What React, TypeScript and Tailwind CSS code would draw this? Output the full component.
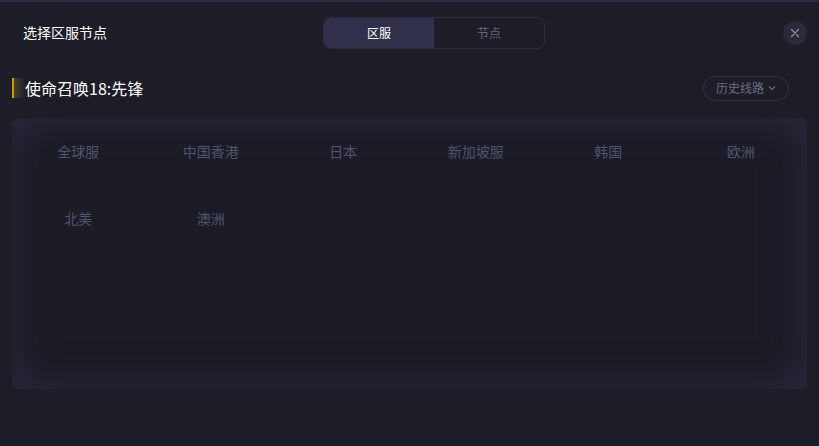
import { useState } from "react";

const REGIONS = ["全球服", "中国香港", "日本", "新加坡服", "韩国", "欧洲", "北美", "澳洲"];

export default function App() {
  const [tab, setTab] = useState<"region" | "node">("region");

  return (
    <div
      className="w-[819px] h-[446px] bg-[#1d1d28] border-t-2 border-[#2e2b45] flex flex-col overflow-hidden"
      style={{ fontFamily: '"Noto Sans CJK SC", "Noto Sans", sans-serif' }}
    >
      {/* header */}
      <div className="flex items-center h-[31px] mt-[15px] pl-[23px] pr-[12px]">
        <div className="w-[300px] text-[14px] text-white">选择区服节点</div>
        <div className="flex w-[222px] h-[32px] rounded-[8px] border border-[#2e2d40] overflow-hidden text-[12px]">
          <button
            onClick={() => setTab("region")}
            className={`flex-1 ${tab === "region" ? "bg-[#30304a] text-white" : "text-[#66667a]"}`}
          >
            区服
          </button>
          <button
            onClick={() => setTab("node")}
            className={`flex-1 ${tab === "node" ? "bg-[#30304a] text-white" : "text-[#66667a]"}`}
          >
            节点
          </button>
        </div>
        <div className="flex-1 flex justify-end">
          <button className="w-6 h-6 rounded-full bg-[#2a2a3a] flex items-center justify-center">
            <svg width="10" height="10" viewBox="0 0 10 10" stroke="#8a8a9c" strokeWidth="1.4" strokeLinecap="round">
              <path d="M1.5 1.5l7 7M8.5 1.5l-7 7" />
            </svg>
          </button>
        </div>
      </div>

      {/* game title row */}
      <div className="flex items-center mt-[27px] pl-[12px] pr-[30px] h-[26px]">
        <div className="flex items-center h-[20px]">
          <div className="w-[2px] h-full bg-[#c9981a]" />
          <div className="w-[12px] h-full bg-gradient-to-r from-[#4e421e] to-transparent" />
        </div>
        <div className="flex-1 text-[16px] text-white -ml-[1px]">使命召唤18:先锋</div>
        <button className="flex items-center gap-1 h-[25px] px-[12px] rounded-full border border-[#353446] text-[12px] text-[#6c6c80]">
          历史线路
          <svg width="8" height="6" viewBox="0 0 8 6" fill="none" stroke="#6c6c80" strokeWidth="1.2">
            <path d="M1 1.5l3 3 3-3" />
          </svg>
        </button>
      </div>

      {/* region panel */}
      <div className="mx-[12px] mt-[17px] h-[271px] rounded-[6px] bg-[#1c1c27] shadow-[inset_0_0_40px_rgba(52,52,80,0.55)] pt-[23px]">
        <div className="grid grid-cols-6 gap-y-[47px]">
          {REGIONS.map((r) => (
            <div key={r} className="text-center text-[14px] leading-[20px] text-[#50546e]">
              {r}
            </div>
          ))}
        </div>
      </div>
    </div>
  );
}
